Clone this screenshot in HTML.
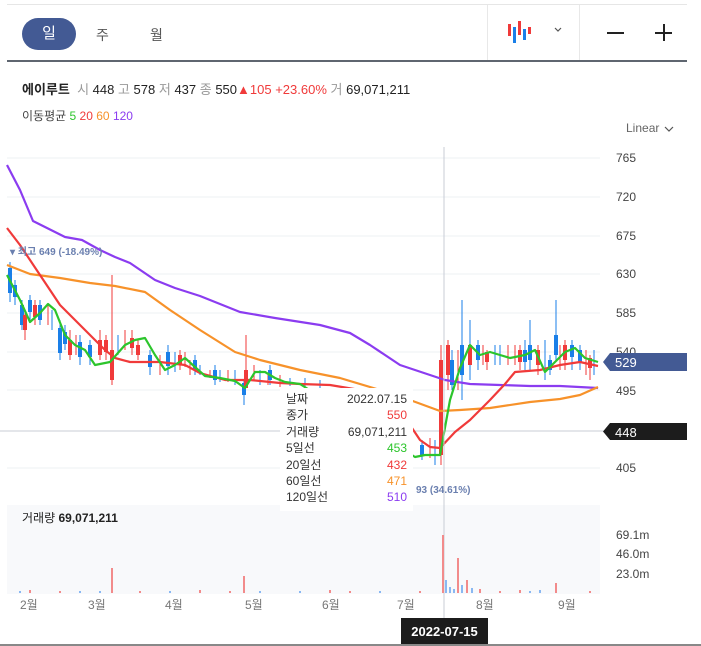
<!DOCTYPE html>
<html><head><meta charset="utf-8"><style>
body{margin:0;width:701px;height:646px;background:#fff;font-family:"Liberation Sans","Noto Sans CJK KR",sans-serif;overflow:hidden;position:relative}
.a{position:absolute;white-space:nowrap}
</style></head><body>
<div class="a" style="left:7px;top:4px;width:680px;height:1px;background:#e6e6e6"></div>
<div class="a" style="left:7px;top:60px;width:680px;height:2px;background:#5f6670"></div>
<div class="a" style="left:487px;top:5px;width:1px;height:55px;background:#e8e8e8"></div>
<div class="a" style="left:579px;top:5px;width:1px;height:55px;background:#e8e8e8"></div>
<div class="a" style="left:22px;top:18px;width:54px;height:32px;border-radius:16px;background:#435a94;color:#fff;font-size:15px;line-height:32px;text-align:center">일</div>
<div class="a" style="left:96px;top:25px;font-size:14px;color:#555">주</div>
<div class="a" style="left:150px;top:25px;font-size:14px;color:#555">월</div>
<svg class="a" style="left:505px;top:18px" width="80" height="30">
<rect x="3" y="6" width="3" height="12" fill="#f03a3a"/><rect x="8" y="9" width="3" height="16" fill="#1a7fe8"/><rect x="13" y="3" width="3" height="14" fill="#f03a3a"/><rect x="18" y="11" width="3" height="11" fill="#1a7fe8"/><rect x="23" y="9" width="3" height="7" fill="#f03a3a"/>
<path d="M50 10 l3 3 l3 -3" stroke="#555" fill="none" stroke-width="1.2"/></svg>
<div class="a" style="left:607px;top:32px;width:17px;height:1.5px;background:#222"></div>
<div class="a" style="left:655px;top:32px;width:17px;height:1.5px;background:#222"></div>
<div class="a" style="left:663px;top:24px;width:1.5px;height:17px;background:#222"></div>
<div class="a" style="left:22px;top:79px;font-size:13px;color:#222"><b>에이루트</b>&nbsp; <span style="color:#999">시</span> 448 <span style="color:#999">고</span> 578 <span style="color:#999">저</span> 437 <span style="color:#999">종</span> 550<span style="color:#f03a3a">▲105 +23.60%</span> <span style="color:#999">거</span> 69,071,211</div>
<div class="a" style="left:22px;top:107px;font-size:12px;color:#444">이동평균 <span style="color:#2cc52c">5</span> <span style="color:#f03a3a">20</span> <span style="color:#f7922a">60</span> <span style="color:#8b3cf0">120</span></div>
<div class="a" style="left:626px;top:121px;font-size:12px;color:#666">Linear</div>
<svg class="a" style="left:664px;top:125px" width="12" height="8"><path d="M1 2 l4 4 l4 -4" stroke="#555" fill="none" stroke-width="1.2"/></svg>
<svg class="a" style="left:0;top:0" width="701" height="646">
<g stroke="#eef0f3" stroke-width="1">
<line x1="7" y1="158" x2="600" y2="158"/><line x1="7" y1="197" x2="600" y2="197"/><line x1="7" y1="236" x2="600" y2="236"/><line x1="7" y1="274" x2="600" y2="274"/><line x1="7" y1="313" x2="600" y2="313"/><line x1="7" y1="352" x2="600" y2="352"/><line x1="7" y1="390" x2="600" y2="390"/><line x1="7" y1="468" x2="600" y2="468"/></g>
<line x1="0" y1="431" x2="605" y2="431" stroke="#c8cdd6"/>
<rect x="7" y="505" width="593" height="89" fill="#f8f9fb"/>
<g stroke-width="1">
<path d="M10 262v40M15 280v25M22 300v30M30 295v25M40 300v25M52 310v20M60 320v40M65 325v25M80 335v30M90 340v25M118 335v20M150 350v25M168 345v30M175 352v20M195 355v20M200 365v10M215 365v20M220 370v12M235 370v15M244 380v25M260 370v15M270 365v20M290 378v8M305 378v10M320 380v10M422 440v20M435 440v25M452 350v40M462 300v100M470 320v60M478 340v30M495 345v20M500 345v20M525 340v30M530 320v50M545 340v40M550 355v20M556 300v60M572 340v30M580 345v25M594 350v25" stroke="#1a7fe8"/>
<path d="M25 310v30M35 300v25M48 305v20M70 330v30M76 335v20M100 330v30M106 335v25M112 275v110M125 330v20M132 330v25M138 340v20M160 355v20M180 350v20M185 352v15M190 360v15M210 370v8M228 370v12M246 335v50M254 365v15M268 375v10M280 375v12M430 438v20M441 345v120M448 340v50M458 350v40M483 345v20M487 350v20M508 345v20M515 345v20M520 345v25M538 345v30M560 345v25M565 340v30M586 350v25M590 355v25" stroke="#f03a3a"/>
</g>
<g>
<rect x="8" y="268" width="4" height="25" fill="#1a7fe8"/><rect x="13" y="285" width="4" height="12" fill="#1a7fe8"/><rect x="20" y="305" width="4" height="20" fill="#1a7fe8"/><rect x="28" y="300" width="4" height="12" fill="#1a7fe8"/><rect x="38" y="305" width="4" height="15" fill="#1a7fe8"/><rect x="58" y="328" width="4" height="25" fill="#1a7fe8"/><rect x="63" y="332" width="4" height="12" fill="#1a7fe8"/><rect x="78" y="342" width="4" height="15" fill="#1a7fe8"/><rect x="88" y="345" width="4" height="12" fill="#1a7fe8"/><rect x="148" y="355" width="4" height="12" fill="#1a7fe8"/><rect x="166" y="352" width="4" height="14" fill="#1a7fe8"/><rect x="193" y="360" width="4" height="10" fill="#1a7fe8"/><rect x="213" y="370" width="4" height="10" fill="#1a7fe8"/><rect x="242" y="383" width="4" height="12" fill="#1a7fe8"/><rect x="268" y="370" width="4" height="10" fill="#1a7fe8"/><rect x="420" y="445" width="4" height="10" fill="#1a7fe8"/><rect x="450" y="360" width="4" height="25" fill="#1a7fe8"/><rect x="460" y="345" width="4" height="30" fill="#1a7fe8"/><rect x="476" y="345" width="4" height="15" fill="#1a7fe8"/><rect x="523" y="350" width="4" height="12" fill="#1a7fe8"/><rect x="528" y="345" width="4" height="15" fill="#1a7fe8"/><rect x="548" y="360" width="4" height="10" fill="#1a7fe8"/><rect x="554" y="335" width="4" height="20" fill="#1a7fe8"/><rect x="570" y="345" width="4" height="12" fill="#1a7fe8"/><rect x="578" y="350" width="4" height="12" fill="#1a7fe8"/>
<rect x="23" y="315" width="4" height="15" fill="#f03a3a"/><rect x="33" y="305" width="4" height="12" fill="#f03a3a"/><rect x="68" y="340" width="4" height="15" fill="#f03a3a"/><rect x="98" y="340" width="4" height="15" fill="#f03a3a"/><rect x="104" y="340" width="4" height="12" fill="#f03a3a"/><rect x="110" y="350" width="4" height="30" fill="#f03a3a"/><rect x="130" y="338" width="4" height="10" fill="#f03a3a"/><rect x="136" y="345" width="4" height="10" fill="#f03a3a"/><rect x="178" y="355" width="4" height="10" fill="#f03a3a"/><rect x="244" y="370" width="4" height="18" fill="#f03a3a"/><rect x="439" y="360" width="4" height="95" fill="#f03a3a"/><rect x="446" y="345" width="4" height="30" fill="#f03a3a"/><rect x="468" y="345" width="4" height="20" fill="#f03a3a"/><rect x="485" y="352" width="4" height="10" fill="#f03a3a"/><rect x="518" y="350" width="4" height="12" fill="#f03a3a"/><rect x="536" y="350" width="4" height="15" fill="#f03a3a"/><rect x="563" y="345" width="4" height="15" fill="#f03a3a"/><rect x="588" y="358" width="4" height="10" fill="#f03a3a"/>
</g>
<g fill="none" stroke-width="2.2" stroke-linejoin="round">
<polyline stroke="#8b3cf0" points="7,165 20,190 33,221 47,228 65,237 82,240 100,250 115,257 130,263 155,280 175,288 200,296 240,312 275,318 320,325 350,333 370,345 400,365 430,375 445,380 470,384 500,385 530,386 560,386 598,388"/>
<polyline stroke="#f7922a" points="7,265 30,274 60,278 90,283 115,286 145,292 170,310 200,330 235,352 260,360 300,370 340,378 380,390 410,400 440,411 460,410 490,408 530,402 560,399 580,395 598,387"/>
<polyline stroke="#f03a3a" points="7,228 20,245 40,275 60,305 75,320 90,335 105,350 115,358 130,362 160,362 185,365 200,373 225,380 250,380 280,383 300,384 330,385 360,390 400,410 420,440 430,447 440,448 455,432 470,420 490,400 505,384 515,372 540,370 560,365 580,362 598,366"/>
<polyline stroke="#2cc52c" points="7,275 20,300 30,322 40,313 48,304 55,310 65,335 75,345 85,350 95,365 110,362 125,345 135,340 145,338 155,355 165,370 175,365 185,358 195,367 205,376 220,378 235,381 245,388 255,372 265,372 275,378 285,382 300,384 415,457 425,455 440,455 450,400 460,368 470,345 480,355 490,352 500,355 510,358 525,355 535,350 545,372 555,362 565,352 575,348 585,358 598,362"/>
</g>
<line x1="444" y1="147" x2="444" y2="620" stroke="#c8cdd6"/>
<g stroke-width="2">
<path d="M112 593v-25M244 593v-17M443 593v-58M458 593v-35M467 593v-13M556 593v-10M200 593v-3M330 593v-3M480 593v-4M520 593v-3M30 593v-3M60 593v-2M140 593v-2M230 593v-2M350 593v-2M420 593v-2M500 593v-2M590 593v-2" stroke="#f28b8b"/>
<path d="M446 593v-13M450 593v-6M454 593v-4M462 593v-8M472 593v-5M80 593v-2M170 593v-2M300 593v-2M540 593v-3M20 593v-2M100 593v-2M260 593v-2M380 593v-2M530 593v-2" stroke="#8ab8f2"/>
</g>
<g font-size="12" fill="#444" font-family="Liberation Sans,sans-serif">
<text x="616" y="162">765</text><text x="616" y="201">720</text><text x="616" y="240">675</text><text x="616" y="278">630</text><text x="616" y="317">585</text><text x="616" y="356">540</text><text x="616" y="395">495</text><text x="616" y="472">405</text>
<text x="616" y="539">69.1m</text><text x="616" y="558">46.0m</text><text x="616" y="578">23.0m</text>
</g>
<path d="M610 353 H687 V371 H610 L603 362 Z" fill="#435a94"/>
<text x="615" y="367" font-size="13" fill="#fff">529</text>
<path d="M610 423 H687 V440 H610 L603 431.5 Z" fill="#1c1c1c"/>
<text x="615" y="437" font-size="13" fill="#fff">448</text>
<text x="10" y="255" font-size="10" fill="#6a7faf" font-weight="bold">▾ 최고 649 (-18.49%)</text>
<text x="416" y="493" font-size="10" fill="#6a7faf" font-weight="bold">93 (34.61%)</text>
<g font-size="12" fill="#777"><text x="20" y="609">2월</text><text x="88" y="609">3월</text><text x="165" y="609">4월</text><text x="245" y="609">5월</text><text x="322" y="609">6월</text><text x="397" y="609">7월</text><text x="476" y="609">8월</text><text x="558" y="609">9월</text></g>
<text x="22" y="522" font-size="12" fill="#222">거래량 <tspan font-weight="bold">69,071,211</tspan></text>
</svg>
<div class="a" style="left:280px;top:388px;width:133px;height:120px;background:#fff;font-size:12px;line-height:16.4px;color:#333;padding-top:3px">
<div style="padding-left:6px;position:relative">날짜<span style="position:absolute;right:6px;color:#333">2022.07.15</span></div>
<div style="padding-left:6px;position:relative">종가<span style="position:absolute;right:6px;color:#f03a3a">550</span></div>
<div style="padding-left:6px;position:relative">거래량<span style="position:absolute;right:6px">69,071,211</span></div>
<div style="padding-left:6px;position:relative">5일선<span style="position:absolute;right:6px;color:#2cc52c">453</span></div>
<div style="padding-left:6px;position:relative">20일선<span style="position:absolute;right:6px;color:#f03a3a">432</span></div>
<div style="padding-left:6px;position:relative">60일선<span style="position:absolute;right:6px;color:#f7922a">471</span></div>
<div style="padding-left:6px;position:relative">120일선<span style="position:absolute;right:6px;color:#8b3cf0">510</span></div>
</div>
<div class="a" style="left:401px;top:618px;width:87px;height:28px;background:#1c1c1c;color:#fff;font-size:13px;font-weight:bold;line-height:28px;text-align:center">2022-07-15</div>
<div class="a" style="left:0;top:644px;width:701px;height:2px;background:#888"></div>
</body></html>
